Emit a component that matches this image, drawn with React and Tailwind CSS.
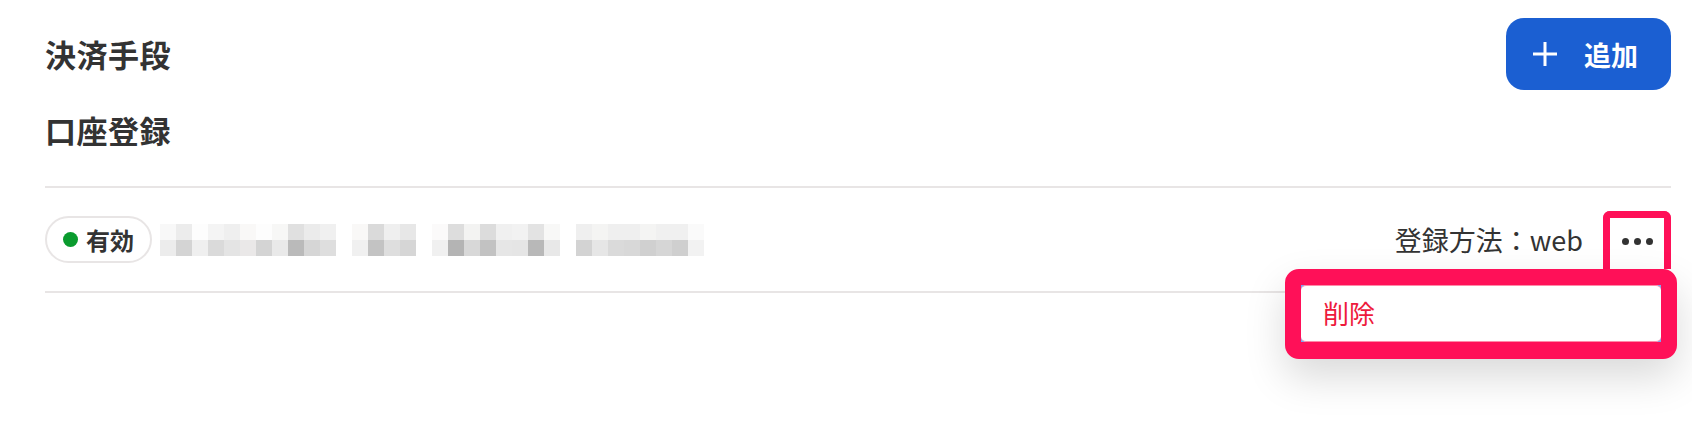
import React from "react";

const FONT = {
  fontFamily:
    '"Noto Sans CJK JP", "Noto Sans", "Liberation Sans", sans-serif',
};

// Masked account number: each group is a list of [top, bottom] cell colours
const MASK_GROUPS = [
  [
    ["bg-[#f8f8f8]", "bg-[#ececec]"],
    ["bg-[#ececec]", "bg-[#d4d4d4]"],
    ["bg-[#fdfdfd]", "bg-[#efefef]"],
    ["bg-[#f4f4f4]", "bg-[#dadada]"],
    ["bg-[#efefef]", "bg-[#e4e4e4]"],
    ["bg-[#f9f8f7]", "bg-[#eae8e8]"],
    ["bg-[#fdfdfd]", "bg-[#d4d4d4]"],
    ["bg-[#f7f7f6]", "bg-[#e9e9e9]"],
    ["bg-[#e0e0e0]", "bg-[#bababa]"],
    ["bg-[#ebebeb]", "bg-[#d6d6d6]"],
    ["bg-[#f0f0f0]", "bg-[#dedede]"],
  ],
  [
    ["bg-[#f9f8f7]", "bg-[#f0f0f0]"],
    ["bg-[#dadada]", "bg-[#c3c3c3]"],
    ["bg-[#efefef]", "bg-[#dedede]"],
    ["bg-[#e7e7e7]", "bg-[#d6d6d6]"],
  ],
  [
    ["bg-[#fbfafa]", "bg-[#f0f0f0]"],
    ["bg-[#dddddd]", "bg-[#b4b4b4]"],
    ["bg-[#f3f3f2]", "bg-[#d8d8d8]"],
    ["bg-[#dcdcdc]", "bg-[#c2c2c2]"],
    ["bg-[#f0f0f0]", "bg-[#e6e6e6]"],
    ["bg-[#f2f2f2]", "bg-[#e5e5e5]"],
    ["bg-[#e3e3e3]", "bg-[#b8b8b8]"],
    ["bg-[#f8f8f7]", "bg-[#e8e8e8]"],
  ],
  [
    ["bg-[#efefef]", "bg-[#d3d3d3]"],
    ["bg-[#f4f4f3]", "bg-[#e6e6e6]"],
    ["bg-[#efefef]", "bg-[#dadada]"],
    ["bg-[#efefef]", "bg-[#d8d8d8]"],
    ["bg-[#f4f4f3]", "bg-[#d0d0d0]"],
    ["bg-[#f0f0f0]", "bg-[#d6d6d6]"],
    ["bg-[#f0f0f0]", "bg-[#cfcfcf]"],
    ["bg-[#fafafa]", "bg-[#f2f2f2]"],
  ],
];

function MaskedNumber() {
  return (
    <div className="flex gap-4">
      {MASK_GROUPS.map((group, gi) => (
        <div key={gi} className="flex">
          {group.map(([top, bottom], ci) => (
            <div key={ci} className="flex flex-col">
              <div className={`w-4 h-4 ${top}`} />
              <div className={`w-4 h-4 ${bottom}`} />
            </div>
          ))}
        </div>
      ))}
    </div>
  );
}

function PlusIcon() {
  return (
    <svg width="26" height="26" viewBox="0 0 26 26" fill="none">
      <path d="M13 1v24M1 13h24" stroke="white" strokeWidth="3" />
    </svg>
  );
}

export default function App() {
  return (
    <div className="w-[1692px] h-[430px] bg-white text-[#333333]" style={FONT}>
      <div className="pl-[45px] pr-[21px] pt-[18px]">
        {/* Header */}
        <div className="flex items-center justify-between">
          <h1 className="text-[31px] leading-[40px] font-bold tracking-[0.5px]">
            決済手段
          </h1>
          <button className="w-[165px] h-[72px] rounded-[18px] bg-[#1b5fd2] flex items-center pl-[26px] gap-[26px] text-white">
            <PlusIcon />
            <span className="text-[27px] font-bold leading-none">追加</span>
          </button>
        </div>

        <h2 className="mt-[20px] text-[31px] leading-[40px] font-bold tracking-[0.5px]">
          口座登録
        </h2>

        <div className="mt-[36px] h-[2px] bg-[#e8e5e5]" />

        {/* Account row */}
        <div className="flex items-center justify-between h-[103px]">
          <div className="flex items-center gap-[8px]">
            <div className="h-[47px] w-[107px] rounded-full border-2 border-[#e8e5e5] flex items-center pl-[16px] gap-[8px]">
              <span className="w-[15px] h-[15px] rounded-full bg-[#0a9b2e]" />
              <span className="text-[24px] font-bold leading-none">有効</span>
            </div>
            <MaskedNumber />
          </div>

          <div className="flex items-center gap-[20px]">
            <span className="text-[27px] leading-none">登録方法：web</span>
            <div className="relative">
              <button className="w-[68px] h-[58px] border-[7px] border-b-0 border-[#ff1058] rounded-t-[7px] bg-white flex items-center justify-center gap-[5px] pb-[6px] pt-[3px]">
                <span className="w-[7px] h-[7px] rounded-full bg-[#333333]" />
                <span className="w-[7px] h-[7px] rounded-full bg-[#333333]" />
                <span className="w-[7px] h-[7px] rounded-full bg-[#333333]" />
              </button>

              {/* Action menu */}
              <div className="absolute top-full right-[-6px] w-[392px] rounded-[14px] border-[16px] border-b-[17px] border-[#ff1058] bg-[#7aa7f2] shadow-[0_18px_40px_rgba(0,0,0,0.15)]">
                <div className="h-[57px] rounded-[5px] bg-white flex items-center pl-[22px] border-y border-[#ff8aa8]">
                  <span className="text-[26px] leading-none text-[#ee1a3c]">
                    削除
                  </span>
                </div>
              </div>
            </div>
          </div>
        </div>

        <div className="h-[2px] bg-[#e8e5e5]" />
      </div>
    </div>
  );
}
